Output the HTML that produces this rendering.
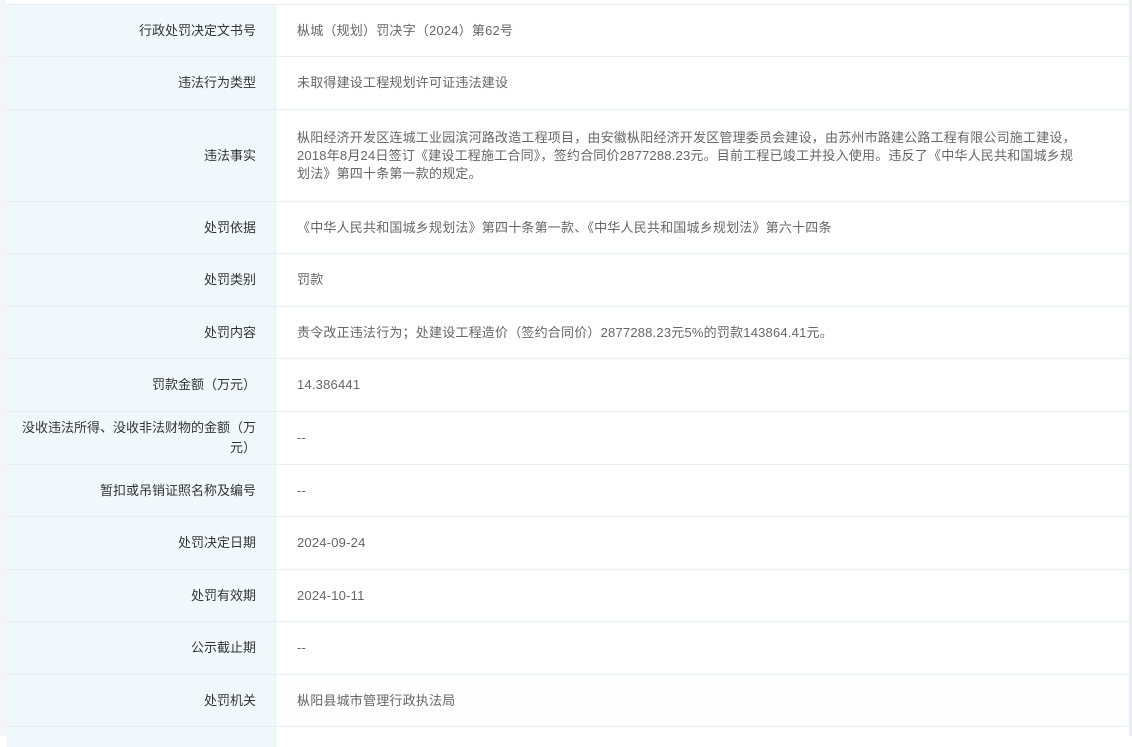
<!DOCTYPE html>
<html><head><meta charset="utf-8"><style>
body{margin:0;width:1132px;height:736px;overflow:hidden;background:#fff;font-family:"Liberation Sans","Noto Sans CJK SC",sans-serif;font-size:13px;}
.t{position:absolute;left:6px;top:4px;width:1123px;background:#fff;border-top:1px solid #e8eef3;}
.r{display:flex;border-bottom:1px solid #e8eef3;box-sizing:border-box;}
.l{width:270px;flex:none;background:#f1f8fc;border-right:1px solid #e8eef3;color:#333;text-align:right;padding-right:19px;box-sizing:border-box;display:flex;align-items:center;justify-content:flex-end;line-height:20px;}
.v{flex:1;color:#666;padding:0 50px 0 21px;display:flex;align-items:center;line-height:18px;letter-spacing:0.2px;}
.lft{position:absolute;left:0;top:0;width:6px;height:736px;background:#f4f5f7;}
.edge{position:absolute;left:1129px;top:0;width:3px;height:736px;background:#e8edf2;}
</style></head><body>
<div class="lft"></div>
<div class="t">
<div class="r" style="height:52px"><div class="l">行政处罚决定文书号</div><div class="v">枞城（规划）罚决字（2024）第62号</div></div>
<div class="r" style="height:53px"><div class="l">违法行为类型</div><div class="v">未取得建设工程规划许可证违法建设</div></div>
<div class="r" style="height:92px"><div class="l">违法事实</div><div class="v">枞阳经济开发区连城工业园滨河路改造工程项目，由安徽枞阳经济开发区管理委员会建设，由苏州市路建公路工程有限公司施工建设，2018年8月24日签订《建设工程施工合同》，签约合同价2877288.23元。目前工程已竣工并投入使用。违反了《中华人民共和国城乡规划法》第四十条第一款的规定。</div></div>
<div class="r" style="height:52px"><div class="l">处罚依据</div><div class="v">《中华人民共和国城乡规划法》第四十条第一款、《中华人民共和国城乡规划法》第六十四条</div></div>
<div class="r" style="height:53px"><div class="l">处罚类别</div><div class="v">罚款</div></div>
<div class="r" style="height:52px"><div class="l">处罚内容</div><div class="v">责令改正违法行为；处建设工程造价（签约合同价）2877288.23元5%的罚款143864.41元。</div></div>
<div class="r" style="height:53px"><div class="l">罚款金额（万元）</div><div class="v">14.386441</div></div>
<div class="r" style="height:53px"><div class="l" style="padding-left:10px">没收违法所得、没收非法财物的金额（万元）</div><div class="v">--</div></div>
<div class="r" style="height:52px"><div class="l">暂扣或吊销证照名称及编号</div><div class="v">--</div></div>
<div class="r" style="height:53px"><div class="l">处罚决定日期</div><div class="v">2024-09-24</div></div>
<div class="r" style="height:52px"><div class="l">处罚有效期</div><div class="v">2024-10-11</div></div>
<div class="r" style="height:53px"><div class="l">公示截止期</div><div class="v">--</div></div>
<div class="r" style="height:52px"><div class="l">处罚机关</div><div class="v" style="background:#fdfdfd">枞阳县城市管理行政执法局</div></div>
<div class="r" style="height:20px;border-bottom:0"><div class="l"></div><div class="v"></div></div>
</div>
<div class="edge"></div>
</body></html>
